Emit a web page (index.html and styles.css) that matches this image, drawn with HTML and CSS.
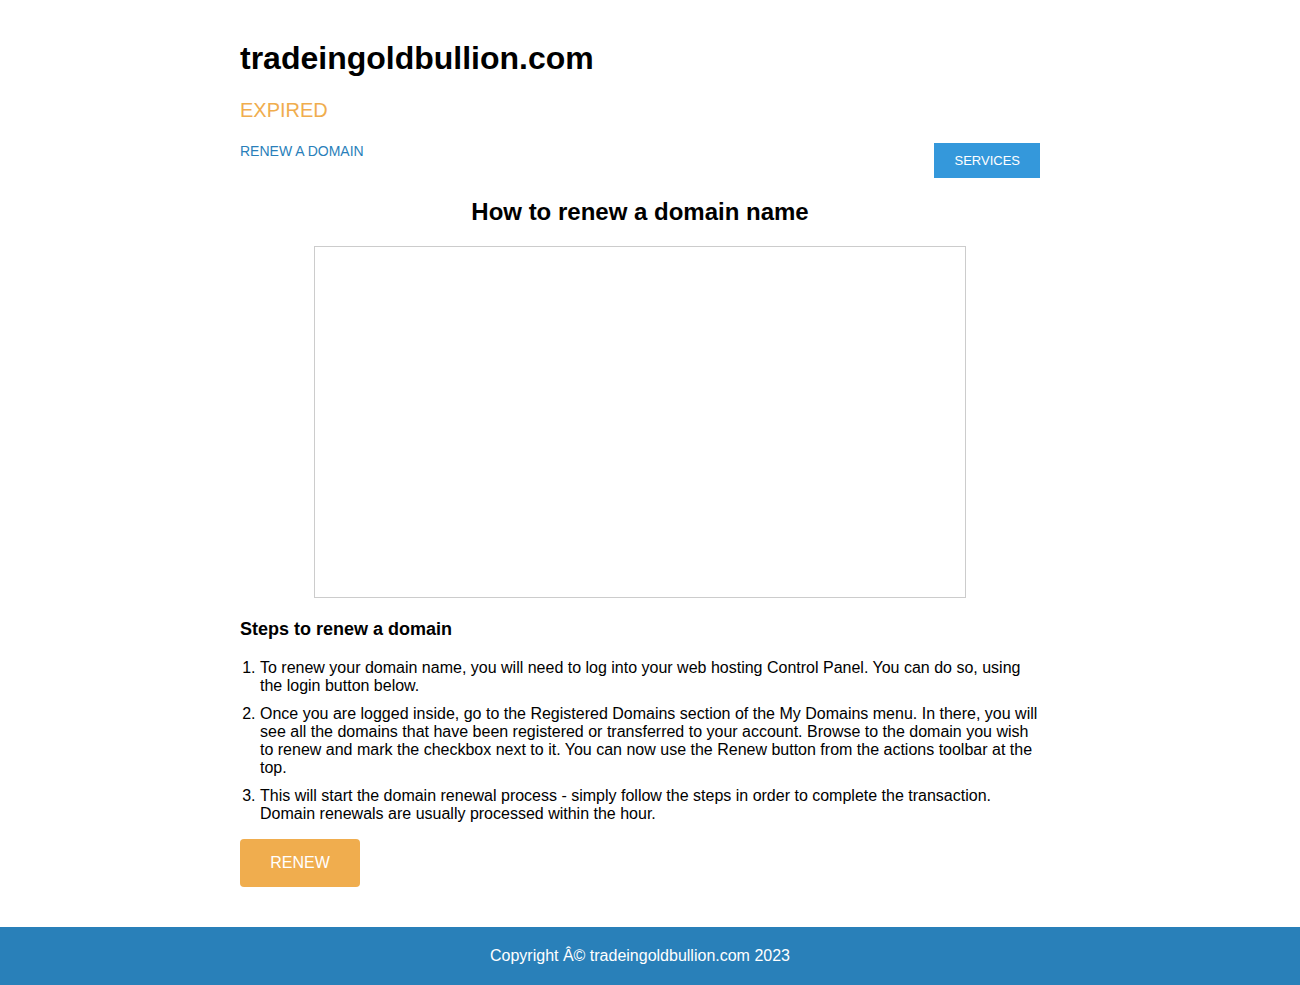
FILE: index.html
```html
<!DOCTYPE html>
<html lang="en">
<head>
<meta charset="utf-8">
<title>tradeingoldbullion.com</title>
<link rel="stylesheet" href="styles.css">
</head>
<body>
<div class="page">
  <div class="container">
    <h1 class="domain">tradeingoldbullion.com</h1>
    <div class="status">EXPIRED</div>
    <div class="nav">
      <a class="nav-link" href="#">RENEW A DOMAIN</a>
      <a class="services" href="#">SERVICES</a>
    </div>
    <h2 class="howto">How to renew a domain name</h2>
    <div class="video"></div>
    <h3 class="steps-title">Steps to renew a domain</h3>
    <ol class="steps">
      <li>To renew your domain name, you will need to log into your web hosting Control Panel. You can do so, using the login button below.</li>
      <li>Once you are logged inside, go to the Registered Domains section of the My Domains menu. In there, you will see all the domains that have been registered or transferred to your account. Browse to the domain you wish to renew and mark the checkbox next to it. You can now use the Renew button from the actions toolbar at the top.</li>
      <li>This will start the domain renewal process - simply follow the steps in order to complete the transaction. Domain renewals are usually processed within the hour.</li>
    </ol>
    <a class="renew" href="#">RENEW</a>
  </div>
</div>
<footer class="footer">Copyright Â© tradeingoldbullion.com 2023</footer>
</body>
</html>
```

FILE: styles.css
```css
html, body {
  margin: 0;
  padding: 0;
  background: #fff;
  font-family: "Liberation Sans", Arial, sans-serif;
  color: #000;
}
.page {
  padding-right: 20px;
}
.container {
  width: 800px;
  margin: 0 auto;
  padding-top: 40px;
  padding-bottom: 40px;
}
.domain {
  margin: 0;
  font-size: 32px;
  line-height: 37px;
  font-weight: bold;
}
.status {
  margin-top: 22px;
  font-size: 20px;
  line-height: 23px;
  color: #f0ad4e;
}
.nav {
  margin-top: 21px;
  display: flex;
  justify-content: space-between;
  align-items: flex-start;
}
.nav-link {
  font-size: 14px;
  line-height: 16px;
  color: #2a7fba;
  text-decoration: none;
}
.services {
  display: block;
  background: #3498db;
  color: #fff;
  font-size: 13px;
  line-height: 15px;
  padding: 10px 20px;
  text-decoration: none;
}
.howto {
  margin: 20px 0 0;
  text-align: center;
  font-size: 24px;
  line-height: 28px;
  font-weight: bold;
}
.video {
  width: 650px;
  height: 350px;
  border: 1px solid #ccc;
  margin: 20px auto 0;
}
.steps-title {
  margin: 21px 0 0;
  font-size: 18px;
  line-height: 21px;
  font-weight: bold;
}
.steps {
  margin: 19px 0 0;
  padding-left: 20px;
  font-size: 16px;
  line-height: 18px;
}
.steps li {
  margin-bottom: 10px;
}
.steps li:last-child {
  margin-bottom: 0;
}
.renew {
  display: inline-block;
  margin-top: 16px;
  width: 120px;
  height: 48px;
  line-height: 48px;
  text-align: center;
  background: #f0ad4e;
  color: #fff;
  font-size: 16px;
  border-radius: 4px;
  text-decoration: none;
}
.footer {
  background: #2980b9;
  color: #fff;
  text-align: center;
  font-size: 16px;
  height: 58px;
  line-height: 58px;
  padding-right: 20px;
}
```
